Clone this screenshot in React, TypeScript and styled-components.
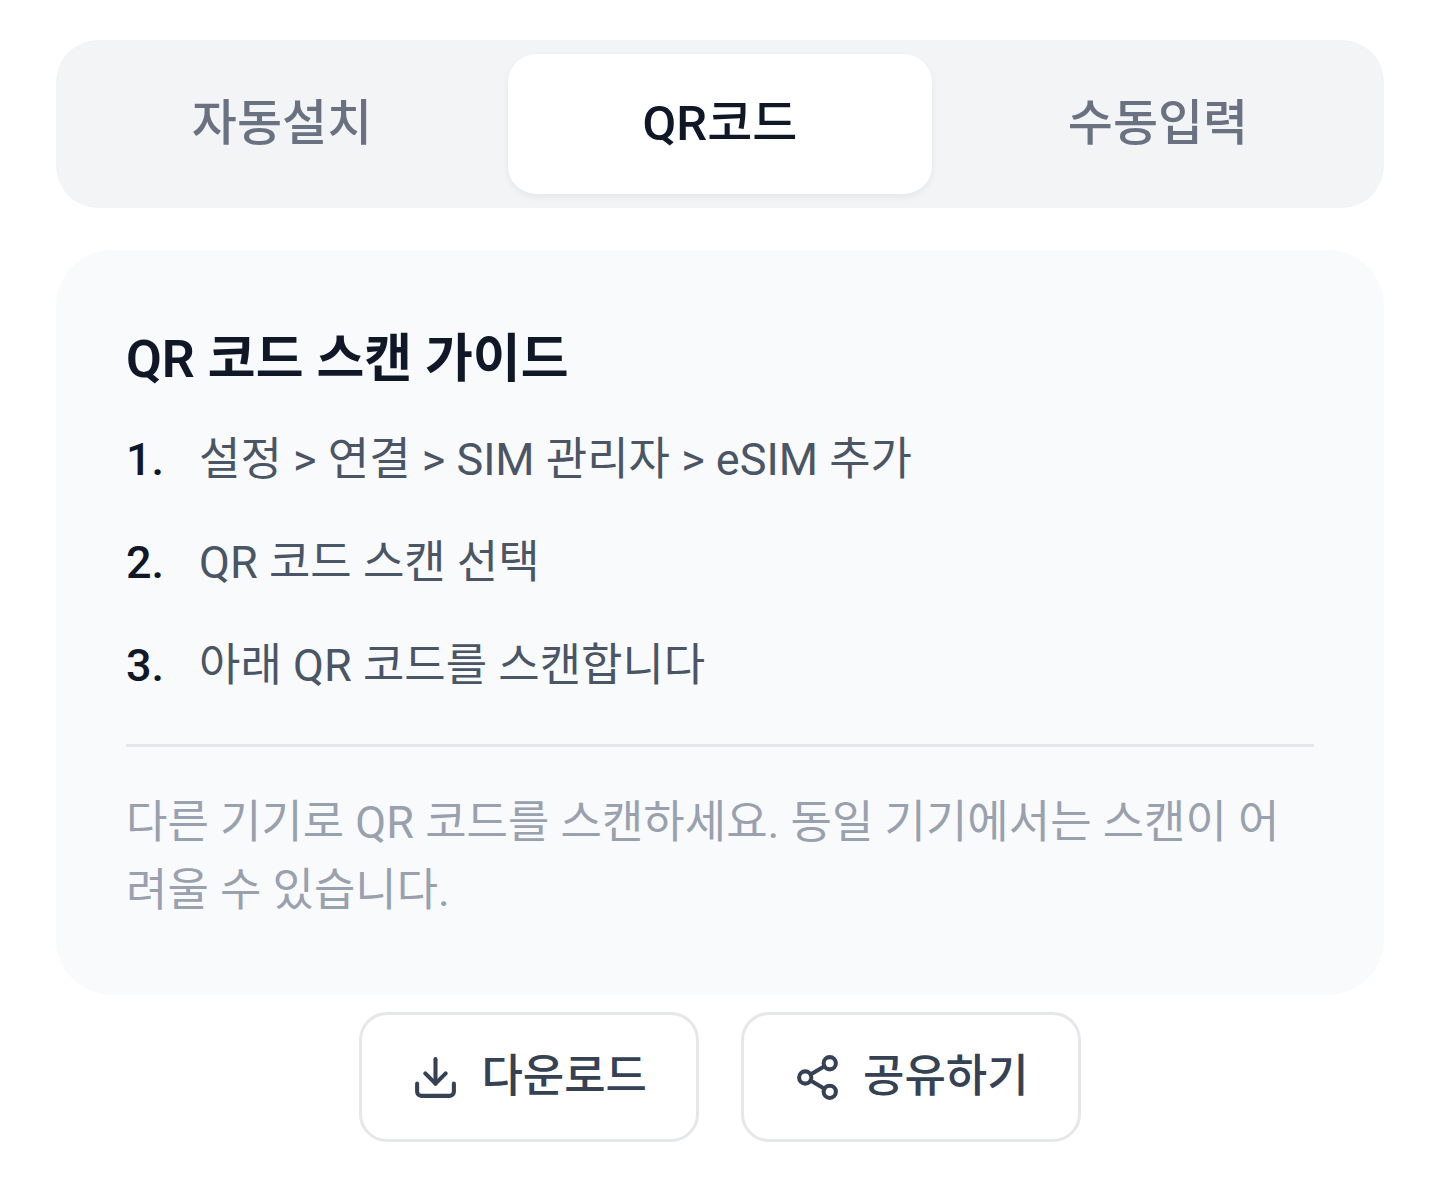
import React, { useState } from "react";
import styled, { createGlobalStyle } from "styled-components";
import { Download, Share2 } from "lucide-react";

const GlobalStyle = createGlobalStyle`
  * { box-sizing: border-box; }
  body {
    margin: 0;
    background: #ffffff;
    font-family: Roboto, "Noto Sans CJK KR", sans-serif;
  }
  button { font-family: inherit; }
`;

const Page = styled.main`
  padding: 40px 56px;
`;

const TabBar = styled.div`
  display: grid;
  grid-template-columns: repeat(3, 1fr);
  gap: 14px;
  padding: 14px;
  border-radius: 42px;
  background: #f3f4f6;
`;

const Tab = styled.button<{ $active: boolean }>`
  padding: 35px 0;
  border: 0;
  border-radius: 28px;
  background: ${(p) => (p.$active ? "#ffffff" : "transparent")};
  box-shadow: ${(p) => (p.$active ? "0 3px 7px rgba(0, 0, 0, 0.06)" : "none")};
  color: ${(p) => (p.$active ? "#101828" : "#6a7282")};
  font-size: 49px;
  font-weight: 500;
  line-height: 70px;
  cursor: pointer;
`;

const Guide = styled.section`
  margin-top: 42px;
  padding: 70px;
  border-radius: 56px;
  background: #f9fafc;
`;

const Title = styled.h2`
  margin: 0 0 26px;
  color: #101828;
  font-size: 52px;
  font-weight: 600;
  line-height: 80px;
`;

const Steps = styled.ol`
  display: grid;
  gap: 35px;
  margin: 0;
  padding: 0;
  list-style: none;
`;

const Step = styled.li`
  display: flex;
  gap: 35px;
  color: #4a5565;
  font-size: 45px;
  line-height: 68px;
`;

const StepNumber = styled.span`
  color: #101828;
  font-weight: 500;
`;

const Note = styled.p`
  margin: 44px 0 0;
  padding-top: 42px;
  border-top: 3px solid #e5e7eb;
  color: #99a1af;
  font-size: 45px;
  line-height: 68px;
`;

const Actions = styled.div`
  display: flex;
  justify-content: center;
  gap: 42px;
  margin-top: 17px;
`;

const ActionButton = styled.button`
  display: flex;
  align-items: center;
  gap: 21px;
  padding: 28px 49px;
  border: 3px solid #e5e7eb;
  border-radius: 28px;
  background: #ffffff;
  color: #364153;
  font-size: 45px;
  font-weight: 500;
  line-height: 68px;
  cursor: pointer;
`;

const tabs = ["자동설치", "QR코드", "수동입력"];
const steps = [
  "설정 > 연결 > SIM 관리자 > eSIM 추가",
  "QR 코드 스캔 선택",
  "아래 QR 코드를 스캔합니다",
];

export default function App() {
  const [active, setActive] = useState("QR코드");
  return (
    <>
      <GlobalStyle />
      <Page lang="ko">
        <TabBar role="tablist">
          {tabs.map((tab) => (
            <Tab
              key={tab}
              type="button"
              role="tab"
              aria-selected={tab === active}
              $active={tab === active}
              onClick={() => setActive(tab)}
            >
              {tab}
            </Tab>
          ))}
        </TabBar>
        <Guide>
          <Title>QR 코드 스캔 가이드</Title>
          <Steps>
            {steps.map((step, i) => (
              <Step key={step}>
                <StepNumber>{i + 1}.</StepNumber>
                <span>{step}</span>
              </Step>
            ))}
          </Steps>
          <Note>
            다른 기기로 QR 코드를 스캔하세요. 동일 기기에서는 스캔이 어려울 수 있습니다.
          </Note>
        </Guide>
        <Actions>
          <ActionButton type="button">
            <Download size={49} aria-hidden />
            다운로드
          </ActionButton>
          <ActionButton type="button">
            <Share2 size={49} aria-hidden />
            공유하기
          </ActionButton>
        </Actions>
      </Page>
    </>
  );
}
